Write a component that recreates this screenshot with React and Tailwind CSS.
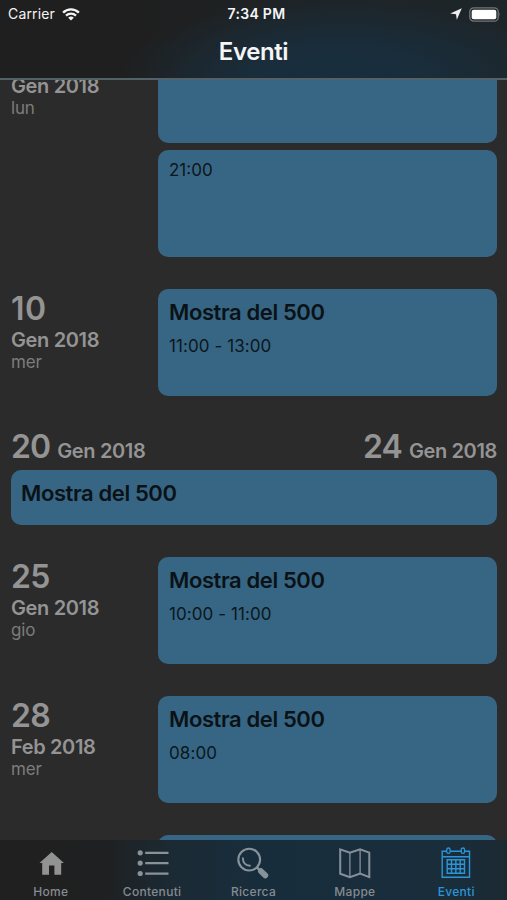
import React from "react";

const WifiIcon = () => (
  <svg className="h-[13px] w-[18px]" viewBox="0 0 18 13" fill="none" stroke="#f4f4f4">
    <path d="M1.1 4.6a11.3 11.3 0 0 1 15.8 0" strokeWidth="2.4" />
    <path d="M4 7.6a7.2 7.2 0 0 1 10 0" strokeWidth="2.2" />
    <path d="M9 12.5 6.2 9.8a4 4 0 0 1 5.6 0Z" fill="#f4f4f4" stroke="none" />
  </svg>
);

const HomeIcon = () => (
  <svg className="h-10 w-10" viewBox="0 0 40 40" fill="#929292">
    <path d="M20.700 12 32.900 23h-2.700v11.800h-6.800v-9.300h-5.400v9.300H11.200V23H8.500Z" />
  </svg>
);

const ListIcon = () => (
  <svg className="h-10 w-10" viewBox="0 0 40 40" fill="#8a9298">
    <circle cx="8.2" cy="12.8" r="2.6" />
    <circle cx="8.2" cy="23.1" r="2.6" />
    <circle cx="8.2" cy="33.5" r="2.6" />
    <path d="M13.200 11.700h23.300v2.300H13.200zM13.200 22h23.300v2.300H13.200zM13.200 32.400h23.300v2.300H13.200z" />
  </svg>
);

const SearchIcon = () => (
  <svg className="h-10 w-10" viewBox="0 0 40 40" fill="none" stroke="#87939b">
    <circle cx="16.200" cy="19.600" r="10.900" strokeWidth="2.100" />
    <path d="M9.900 18.300c0 4.300 2.700 7.300 7 7.500" strokeWidth="1.900" strokeLinecap="round" />
    <path d="m23.900 27.300 3.500 3.500" strokeWidth="2.600" />
    <path d="m28 31.200 4.300 4.200" strokeWidth="5.800" strokeLinecap="round" />
  </svg>
);

const MapIcon = () => (
  <svg className="h-10 w-10" viewBox="0 0 40 40" fill="none" stroke="#87909a">
    <path d="m5.200 9.400 9.700 3.400L25.100 9.300l9.200 3.300v24.500l-9.200-3.500-10.200 3.700-9.700-3.600Z" strokeWidth="2" />
    <path d="M14.900 12.700v24.400M25.100 9v24.400" strokeWidth="1.300" />
  </svg>
);

const CalendarIcon = () => (
  <svg className="h-10 w-10" viewBox="0 0 40 40" fill="none" stroke="#2d95d6">
    <path d="M10.600 11.200H6.200v26h27.300v-26h-4.600M14.200 11.200h10.900M6.200 16.700h27.300" strokeWidth="1.400" />
    <rect x="10.700" y="8" width="3.400" height="5.400" rx="1.700" strokeWidth="1.300" />
    <rect x="25.200" y="8" width="3.400" height="5.400" rx="1.700" strokeWidth="1.300" />
    <path d="M11.200 19.800h17.300v13.400H11.200zM15.500 19.800v13.400M19.850 19.800v13.400M24.200 19.800v13.400M11.200 24.300h17.300M11.200 28.700h17.300" strokeWidth="1.400" />
  </svg>
);

const Title = () => (
  <h2 className="text-[22px] font-semibold leading-[30px] tracking-[-0.4px] text-[#0b1217]">Mostra del 500</h2>
);

function Event({ day, month, weekday, time }) {
  return (
    <section className="mb-8 flex h-[107px]">
      <div className="w-[147px] pt-px text-[#949494]">
        <div className={"text-[32px] font-semibold leading-[37px] " + (day === "10" ? "tracking-[0.4px]" : "tracking-[-0.7px]")}>{day}</div>
        <div className="text-[20px] font-semibold leading-[26px] tracking-[-0.36px]">{month}</div>
        <div className="text-[17px] leading-[18px] tracking-[-0.2px] text-[#7c7c7c]">{weekday}</div>
      </div>
      <div className="flex-1 rounded-[10px] bg-[#366683] px-[11px] pt-2">
        <Title />
        <p className="mt-2 text-[17px] leading-[22px] tracking-[0.08px] text-[#0c161c]">{time}</p>
      </div>
    </section>
  );
}

const RangeDate = ({ day }) => (
  <div className="flex items-baseline gap-[7px] font-semibold text-[#949494]">
    <span className="text-[32px] leading-[38px] tracking-[-0.9px]">{day}</span>
    <span className="text-[20px] leading-[38px] tracking-[-0.36px]">Gen 2018</span>
  </div>
);

const tabs = [
  ["Home", HomeIcon],
  ["Contenuti", ListIcon],
  ["Ricerca", SearchIcon],
  ["Mappe", MapIcon],
  ["Eventi", CalendarIcon],
];

export default function App() {
  return (
    <div className="flex h-[900px] w-[507px] flex-col overflow-hidden bg-[#2b2b2b] font-['Inter','Liberation_Sans',sans-serif]">
      <header className="h-20 shrink-0 border-b-2 border-[#536168] bg-[radial-gradient(ellipse_220px_80px_at_340px_78px,#182e3e_0%,#192d3b_40%,#1f1f1f00_100%),linear-gradient(90deg,#1f1f1f_0%,#1f1f1f_28%,#1e2427_60%,#1e2529_100%)] text-[#f5f5f5]">
        <div className="grid h-7 grid-cols-3 items-center px-2 text-[14px] leading-7">
          <div className="flex items-center gap-[7px]">
            <span className="tracking-[0.150px]">Carrier</span>
            <WifiIcon />
          </div>
          <div className="pl-[6px] text-center text-[14px] font-semibold tracking-[0.3px]">7:34 PM</div>
          <div className="flex items-center justify-end gap-[7px]">
            <svg className="h-3 w-3" viewBox="0 0 12 12" fill="#eeeeee">
              <path d="M11.800.2 6.800 11.800 6 6.200.2 5.500Z" />
            </svg>
            <svg className="-mr-[2px] h-[15px] w-8" viewBox="0 0 32 15">
              <rect x=".8" y=".8" width="28.400" height="13.400" rx="4" fill="none" stroke="#70767a" strokeWidth="1.300" />
              <rect x="2.700" y="2.700" width="24.600" height="9.600" rx="2" fill="#fff" />
              <path d="M30.400 5.300q1.500 2.200 0 4.400z" fill="#70767a" />
            </svg>
          </div>
        </div>
        <h1 className="mt-[9px] text-center text-[24px] font-semibold leading-[30px] tracking-[-0.4px]">Eventi</h1>
      </header>

      <main className="h-[760px] shrink-0 overflow-hidden pl-[11px] pr-[10px]">
        <section className="mb-8 flex h-[177px]">
          <div className="w-[147px] text-[#949494]">
            <div className="-mt-[7px] text-[20px] font-semibold leading-[27px] tracking-[-0.36px]">Gen 2018</div>
            <div className="text-[17px] leading-[17px] tracking-[-0.2px] text-[#7c7c7c]">lun</div>
          </div>
          <div className="flex flex-1 flex-col gap-[7px]">
            <div className="h-[63px] rounded-b-[10px] bg-[#366683]" />
            <div className="h-[107px] rounded-[10px] bg-[#366683] px-[11px] pt-[9px]">
              <p className="text-[17px] leading-[22px] text-[#0c161c]">21:00</p>
            </div>
          </div>
        </section>

        <Event day="10" month="Gen 2018" weekday="mer" time="11:00 - 13:00" />

        <section className="mb-8 h-[97px]">
          <div className="flex h-[42px] justify-between">
            <RangeDate day="20" />
            <RangeDate day="24" />
          </div>
          <div className="h-[55px] rounded-[10px] bg-[#366683] px-[10px] pt-2">
            <Title />
          </div>
        </section>

        <Event day="25" month="Gen 2018" weekday="gio" time="10:00 - 11:00" />
        <Event day="28" month="Feb 2018" weekday="mer" time="08:00" />
        <div className="ml-[147px] h-[107px] rounded-[10px] bg-[#366683]" />
      </main>

      <nav className="grid h-[60px] shrink-0 grid-cols-5 bg-[linear-gradient(90deg,#202020_0%,#1f2021_20%,#1b2a34_34%,#182d3c_50%,#192d3b_90%,#1c2931_100%)]">
        {tabs.map(([label, Icon]) => (
          <div
            key={label}
            className={
              "flex flex-col items-center " + (label === "Eventi" ? "text-[#2d95d6]" : "text-[#858b90]")
            }
          >
            <div className="h-11">
              <Icon />
            </div>
            <span className="text-[12px] font-medium leading-[16px] tracking-[0.3px]">{label}</span>
          </div>
        ))}
      </nav>
    </div>
  );
}
